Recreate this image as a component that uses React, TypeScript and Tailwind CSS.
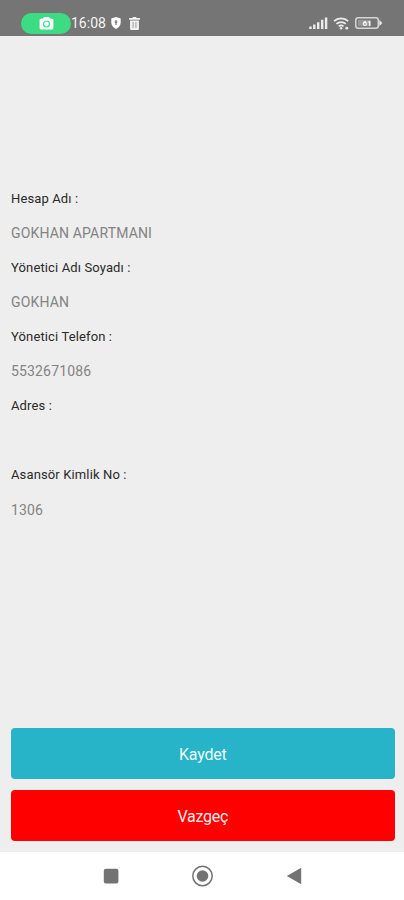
import type { ReactNode } from 'react';

type Field = {
  label: string;
  value: string;
};

const fields: Field[] = [
  { label: 'Hesap Adı :', value: 'GOKHAN APARTMANI' },
  { label: 'Yönetici Adı Soyadı :', value: 'GOKHAN' },
  { label: 'Yönetici Telefon :', value: '5532671086' },
  { label: 'Adres :', value: '' },
  { label: 'Asansör Kimlik No :', value: '1306' },
];

function StatusBar() {
  return (
    <header className="flex h-[35.5px] shrink-0 items-end justify-between bg-[#757575] pr-[21px] pl-[21px] text-white">
      <div className="flex h-[25px] items-center">
        <div className="flex h-[21px] w-[50px] items-center justify-center rounded-full bg-[#3ddc84]">
          <svg className="mt-px h-[13px] w-[15px]" viewBox="0 0 15 13">
            <path d="M5 0h5l1.2 1.7H13a1.4 1.4 0 0 1 1.4 1.4v8A1.4 1.4 0 0 1 13 12.5H2A1.4 1.4 0 0 1 .6 11.1v-8A1.4 1.4 0 0 1 2 1.7h1.8z" fill="#fff" />
            <circle cx="7.5" cy="7" r="3" fill="#fff" stroke="#3ddc84" strokeWidth="1.2" />
          </svg>
        </div>
        <span className="w-[36px] text-[14px] leading-none whitespace-nowrap text-white/95">16:08</span>
        <svg className="ml-1 h-3 w-[10px]" viewBox="0 0 10 12">
          <path d="M5 0l4.7 1.6v4C9.7 8.4 7.8 10.7 5 12 2.2 10.7.3 8.4.3 5.6v-4z" fill="#fff" />
          <path d="M5 3v5M3.6 5.2h2.8" stroke="#757575" strokeWidth="1.2" />
        </svg>
        <svg className="ml-[8px] h-[13px] w-[11px]" viewBox="0 0 10 12">
          <path d="M3.3 0h3.4v1H10v1.6H0V1h3.3zM.9 3.3h8.2v7.5A1.2 1.2 0 0 1 7.9 12H2.1A1.2 1.2 0 0 1 .9 10.8z" fill="#f2f2f2" />
          <path d="M3.7 4.7v5.3M6.3 4.7v5.3" stroke="#8a8a8a" strokeWidth=".8" />
        </svg>
      </div>
      <div className="flex h-[25px] items-center">
        <svg className="h-3 w-5" viewBox="0 0 20 12">
          <path d="M1.5 9.5V12M5.3 7.5V12M9.2 5.2V12M13.2 2.8V12M17.1.5V12" stroke="#ededed" strokeWidth="2.4" />
        </svg>
        <svg className="ml-1 h-[13px] w-[17px]" viewBox="0 0 17 13" fill="none" stroke="#ededed" strokeWidth="1.7">
          <path d="M1 4.2a10.4 10.4 0 0 1 14.2 0M3.4 6.9a7 7 0 0 1 9.4 0M5.7 9.4a3.7 3.7 0 0 1 4.8 0" />
          <circle cx="8.1" cy="11.3" r="1.2" fill="#ededed" stroke="none" />
          <circle cx="13.8" cy="11.2" r="1.4" fill="#ededed" stroke="none" />
        </svg>
        <svg className="ml-[5px] h-3 w-[28px]" viewBox="0 0 28 12">
          <rect x=".8" y=".8" width="22.5" height="10.4" rx="2.5" fill="none" stroke="#d6d6d6" strokeWidth="1.5" />
          <rect x="3" y="2.8" width="13" height="6.4" fill="#969696" />
          <path d="M24.3 2.8l3 3.2-3 3.2z" fill="#ededed" />
          <text x="12" y="9" textAnchor="middle" fontSize="8" fontWeight="700" fill="#fff">61</text>
        </svg>
      </div>
    </header>
  );
}

function ActionButton({ className, children }: { className: string; children: ReactNode }) {
  return (
    <button className={`h-[51px] w-full rounded-[4px] pt-[2px] text-[16px] tracking-[-0.25px] text-white/95 ${className}`}>
      {children}
    </button>
  );
}

function NavigationBar() {
  return (
    <nav className="flex h-12 shrink-0 items-center justify-between bg-white pr-[102px] pl-[103px]">
      <svg className="h-4 w-4" viewBox="0 0 16 16">
        <rect x=".8" y=".8" width="14.6" height="14.6" rx="2" fill="#737373" />
      </svg>
      <svg className="h-[22px] w-[22px]" viewBox="0 0 22 22">
        <circle cx="10.5" cy="11" r="9.7" fill="none" stroke="#737373" strokeWidth="1.5" />
        <circle cx="10.5" cy="11" r="5.8" fill="#737373" />
      </svg>
      <svg className="h-[18px] w-4" viewBox="0 0 16 18">
        <path d="M15.2.8v16.4L.8 9z" fill="#737373" />
      </svg>
    </nav>
  );
}

export default function App() {
  return (
    <div className="flex h-screen w-full flex-col overflow-hidden bg-[#eeeeee] font-['Roboto',sans-serif]">
      <StatusBar />
      <main className="flex flex-1 flex-col justify-between px-[11px] pt-[145.5px] pb-[11px]">
        <dl>
          {fields.map((field) => (
            <div key={field.label}>
              <dt className="flex h-[34.6px] items-center text-[13px] tracking-[0.13px] text-[#2a2a2a]">{field.label}</dt>
              <dd className="flex h-[34.6px] items-center pt-px text-[14px] tracking-[0.16px] text-[#838383]">{field.value}</dd>
            </div>
          ))}
        </dl>
        <div className="-mr-[1.5px] flex flex-col gap-[11px]">
          <ActionButton className="bg-[#28b4c8]">Kaydet</ActionButton>
          <ActionButton className="bg-[#ff0000]">Vazgeç</ActionButton>
        </div>
      </main>
      <NavigationBar />
    </div>
  );
}
